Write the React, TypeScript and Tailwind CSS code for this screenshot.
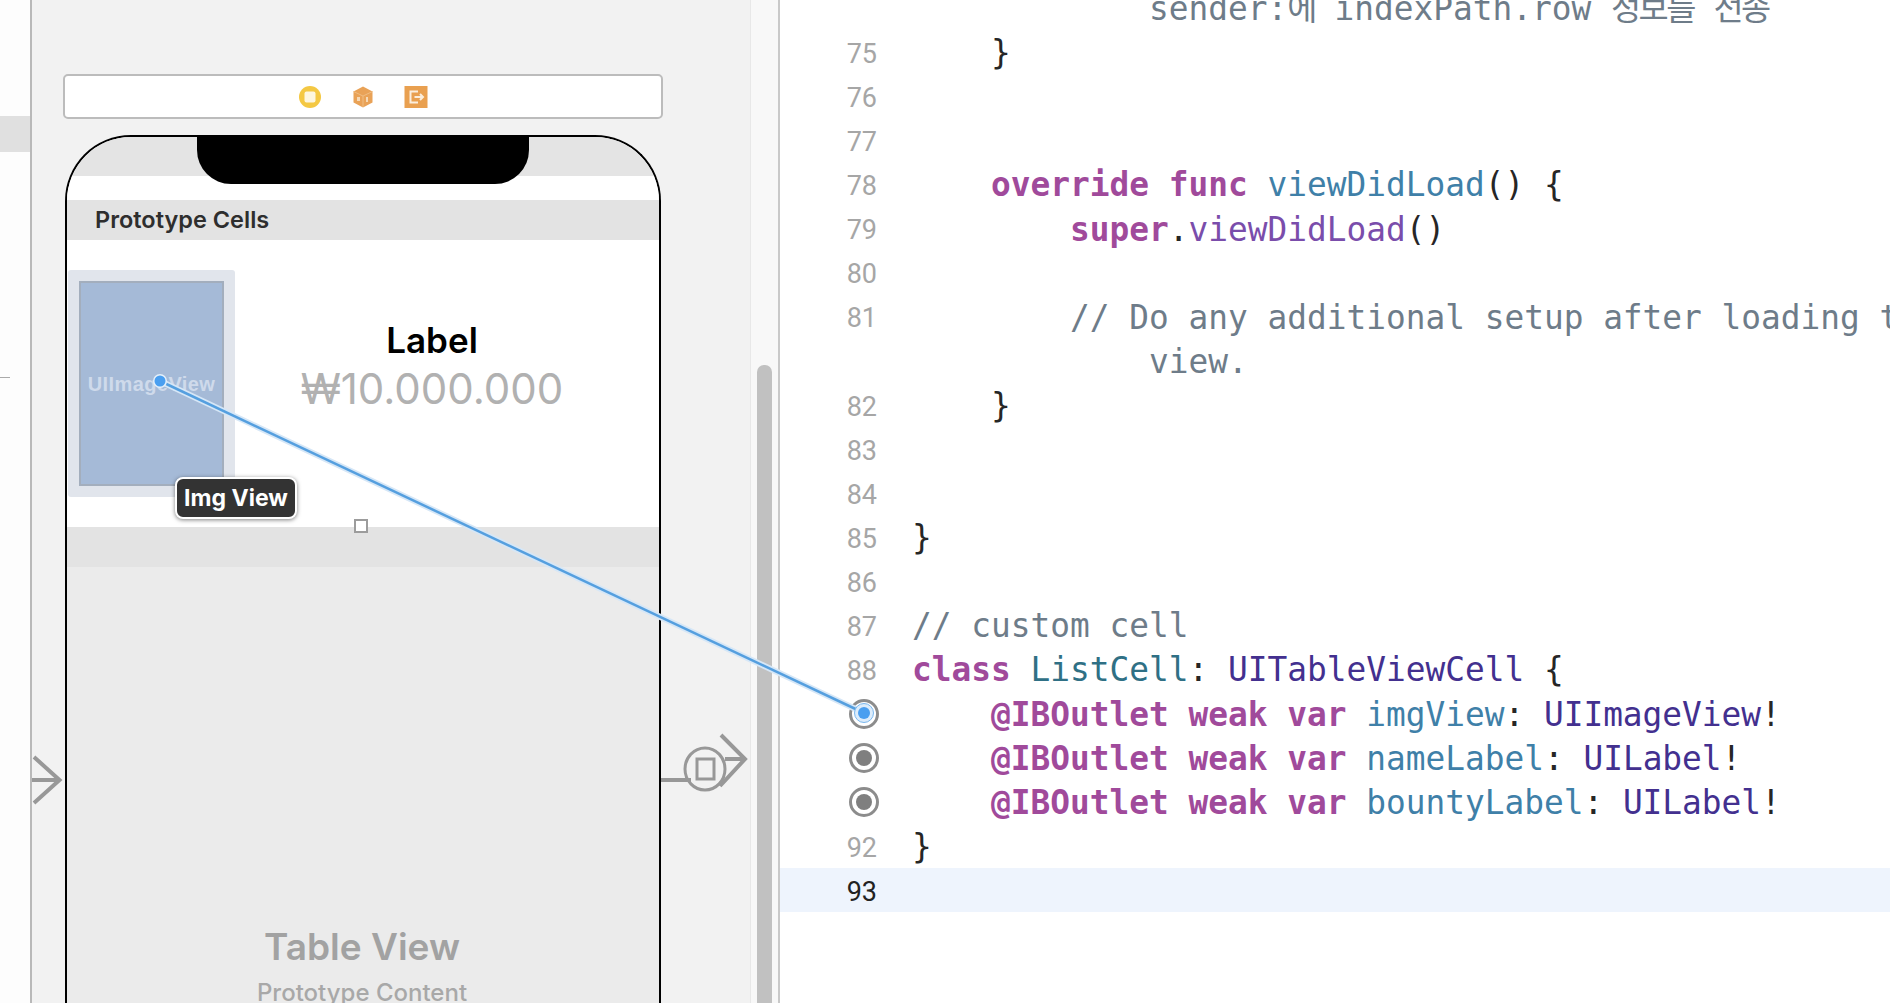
const KW = 'font-bold text-[#a04a9b]';
const FN = 'text-[#3f80a8]';
const SUP = 'text-[#7a4dab]';
const CM = 'text-[#6e7c89]';
const KO = 'text-[#6e7c89] tracking-[-2.6px]';
const TY = 'text-[#43308f]';
const CL = 'text-[#2f7085]';
const PL = 'text-[#262626]';

type Token = [string, string];
type Row = { num?: string; indent?: number; tokens?: Token[]; outlet?: boolean; active?: boolean };

const outlet = (name: string, type: string): Token[] => [
  ['@IBOutlet weak var', KW],
  [' ', PL],
  [name, FN],
  [': ', PL],
  [type, TY],
  ['!', PL],
];

const rows: Row[] = [
  {
    indent: 12,
    tokens: [
      ['sender:', CM],
      ['에', KO],
      [' indexPath.row ', CM],
      ['정보를', KO],
      [' ', CM],
      ['전송', KO],
    ],
  },
  { num: '75', indent: 4, tokens: [['}', PL]] },
  { num: '76' },
  { num: '77' },
  {
    num: '78',
    indent: 4,
    tokens: [['override func', KW], [' ', PL], ['viewDidLoad', FN], ['() {', PL]],
  },
  {
    num: '79',
    indent: 8,
    tokens: [['super', KW], ['.', PL], ['viewDidLoad', SUP], ['()', PL]],
  },
  { num: '80' },
  { num: '81', indent: 8, tokens: [['// Do any additional setup after loading the', CM]] },
  { indent: 12, tokens: [['view.', CM]] },
  { num: '82', indent: 4, tokens: [['}', PL]] },
  { num: '83' },
  { num: '84' },
  { num: '85', tokens: [['}', PL]] },
  { num: '86' },
  { num: '87', tokens: [['// custom cell', CM]] },
  {
    num: '88',
    tokens: [['class', KW], [' ', PL], ['ListCell', CL], [': ', PL], ['UITableViewCell', TY], [' {', PL]],
  },
  { outlet: true, indent: 4, tokens: outlet('imgView', 'UIImageView') },
  { outlet: true, indent: 4, tokens: outlet('nameLabel', 'UILabel') },
  { outlet: true, indent: 4, tokens: outlet('bountyLabel', 'UILabel') },
  { num: '92', tokens: [['}', PL]] },
  { num: '93', active: true },
];

function OutletDot() {
  return (
    <svg width="32" height="32" viewBox="0 0 32 32" className="ml-auto mr-[-3px] mb-[3px]">
      <circle cx="16" cy="16" r="13.5" fill="#fff" stroke="#8c8c8c" strokeWidth="3" />
      <circle cx="16" cy="16" r="8" fill="#7f7f7f" />
    </svg>
  );
}

function CodeRow({ row }: { row: Row }) {
  return (
    <div className={`flex h-[44.1px] items-center pt-[3px] whitespace-pre ${row.active ? 'bg-[#eef4fd]' : ''}`}>
      <div
        className={`w-[97px] shrink-0 flex justify-end pt-[1px] font-['Roboto',sans-serif] text-[27px] ${
          row.active ? 'text-[#222]' : 'text-[#a6a6a6]'
        }`}
      >
        {row.outlet ? <OutletDot /> : row.num}
      </div>
      <div
        className="ml-[35px] mb-[1px] font-['DejaVu_Sans_Mono','Noto_Sans_CJK_KR',monospace] text-[32.8px] leading-[44px]"
        style={{ paddingLeft: (row.indent ?? 0) * 19.75 }}
      >
        {row.tokens?.map((t, i) => (
          <span key={i} className={t[1]}>
            {t[0]}
          </span>
        ))}
      </div>
    </div>
  );
}

function SceneIcons() {
  return (
    <div className="h-[45px] rounded-[5px] border-2 border-[#bcbcbc] bg-white flex items-center justify-center gap-[29px]">
      <svg width="24" height="24" viewBox="0 0 24 24">
        <circle cx="12" cy="12" r="11" fill="#f4c843" />
        <rect x="6.5" y="6.5" width="11" height="11" rx="2" fill="#fdf6df" />
      </svg>
      <svg width="24" height="24" viewBox="0 0 24 24">
        <path d="M12 1.5 21.5 6.5V17.5L12 22.5 2.5 17.5V6.5Z" fill="#e9a257" />
        <path d="M2.5 6.5 12 11 21.5 6.5M12 11V22" fill="none" stroke="#f0bd82" strokeWidth="1" />
        <rect x="6" y="12" width="3" height="4" fill="#f6d9b6" />
        <rect x="15" y="12" width="2" height="5" fill="#f6d9b6" />
      </svg>
      <svg width="24" height="24" viewBox="0 0 24 24">
        <rect x="0.5" y="1" width="23" height="22" fill="#e9a050" />
        <path d="M14 6.5H6.5V17.5H14M10.5 12H19M16 9l3 3-3 3" fill="none" stroke="#fbeedd" strokeWidth="2" />
      </svg>
    </div>
  );
}

function Phone() {
  return (
    <div className="relative mt-[16px] ml-[2px] h-[1000px] w-[596px] rounded-t-[66px] border-2 border-b-0 border-black bg-[#ebebeb] overflow-hidden font-['Inter',sans-serif]">
      {/* notch */}
      <div className="absolute left-[130px] top-[-2px] h-[49px] w-[332px] rounded-b-[34px] bg-black" />
      <div className="h-[39px] bg-[#e4e4e4]" />
      <div className="h-[24px] bg-white" />
      <div className="h-[40px] bg-[#e3e3e3] pl-[28px] flex items-center text-[23.5px] font-semibold text-[#2e2e2e]">
        Prototype Cells
      </div>
      <div className="h-[287px] bg-white flex items-start pl-px">
        <div className="mt-[30px] h-[227px] w-[167px] shrink-0 rounded-[3px] bg-[#e1e5ec] p-[11px]">
          <div className="h-[205px] border-2 border-[#a3aebd] bg-[#a5bad7] flex items-center justify-center font-['Liberation_Sans',sans-serif] text-[20px] tracking-[0.4px] font-bold text-[#cfdaeb]">
            UIImageView
          </div>
        </div>
        <div className="w-[394px] flex flex-col items-center pt-[76px]">
          <div className="text-[35px] leading-[48px] font-semibold text-black">Label</div>
          <div className="text-[42px] leading-[50px] text-[#b1b1b1]">₩10.000.000</div>
        </div>
      </div>
      <div className="h-[40px] bg-[#e3e3e3]" />
      <div className="flex flex-col items-center pt-[356px] pr-[2px] text-[#a2a2a2]">
        <div className="text-[37px] leading-[48px] font-semibold">Table View</div>
        <div className="mt-[7px] text-[24px] leading-[30px] font-medium text-[#a8a8a8]">Prototype Content</div>
      </div>
    </div>
  );
}

function Connection() {
  return (
    <svg className="absolute inset-0 pointer-events-none" width="1890" height="1003" viewBox="0 0 1890 1003">
      <path d="M160 381 864 713" stroke="#d6e7f7" strokeWidth="6" fill="none" />
      <path d="M160 381 864 713" stroke="#559fdf" strokeWidth="2.5" fill="none" />
      <circle cx="160" cy="381" r="7" fill="#e4f0fb" />
      <circle cx="160" cy="381" r="5.5" fill="#4a9ff0" />
      <circle cx="864" cy="713" r="9.5" fill="#dcecfb" stroke="#7ab7ee" strokeWidth="1" />
      <circle cx="864" cy="713" r="6" fill="#4a9ff0" />
      {/* connection handle */}
      <rect x="355" y="520" width="12" height="12" fill="#fff" stroke="#9c9c9c" strokeWidth="2" />
    </svg>
  );
}

function SegueArrows() {
  return (
    <svg className="absolute inset-0 pointer-events-none" width="760" height="1003" viewBox="0 0 760 1003">
      <g fill="none" stroke="#989898" strokeWidth="4">
        <path d="M32 780H59M34 757 59.5 780 34 803" />
        <path d="M661 780H691" />
        <ellipse cx="705" cy="769" rx="20" ry="21" strokeWidth="3" />
        <rect x="697" y="759" width="17" height="20" strokeWidth="3" />
        <path d="M721 735 745 759 720 786M725 759H745" />
      </g>
    </svg>
  );
}

export default function App() {
  return (
    <div className="relative h-[1003px] w-[1890px] overflow-hidden bg-white flex">
      {/* outline strip */}
      <div className="w-[30px] shrink-0 bg-[#fdfdfd]">
        <div className="mt-[116px] h-[36px] bg-[#e0e0e0]" />
        <div className="mt-[225px] h-px w-[10px] bg-[#aaaaaa]" />
      </div>

      {/* storyboard canvas */}
      <div className="relative w-[720px] shrink-0 border-l-2 border-[#b9b9b9] bg-[#f2f2f2] pl-[31px] pt-[74px]">
        <div className="w-[600px]">
          <SceneIcons />
          <Phone />
        </div>
      </div>

      {/* canvas scroller */}
      <div className="w-[30px] shrink-0 border-l border-r-2 border-l-[#e8e8e8] border-r-[#c9c9c9] bg-[#f8f8f8] pl-[6px] pt-[365px]">
        <div className="h-full w-[15px] rounded-t-[7px] bg-[#c1c1c1]" />
      </div>

      <SegueArrows />

      {/* code editor */}
      <div className="flex-1 min-w-0 overflow-hidden mt-[-14px]">
        {rows.map((row, i) => (
          <CodeRow key={i} row={row} />
        ))}
      </div>

      {/* tooltip */}
      <div className="absolute left-[175px] top-[477px] h-[42px] w-[122px] rounded-[8px] border-2 border-white bg-[#333333] shadow-[0_1px_4px_rgba(0,0,0,0.5)] flex items-center justify-center font-['Inter',sans-serif] text-[23px] font-bold text-white">
        Img View
      </div>

      <Connection />
    </div>
  );
}
